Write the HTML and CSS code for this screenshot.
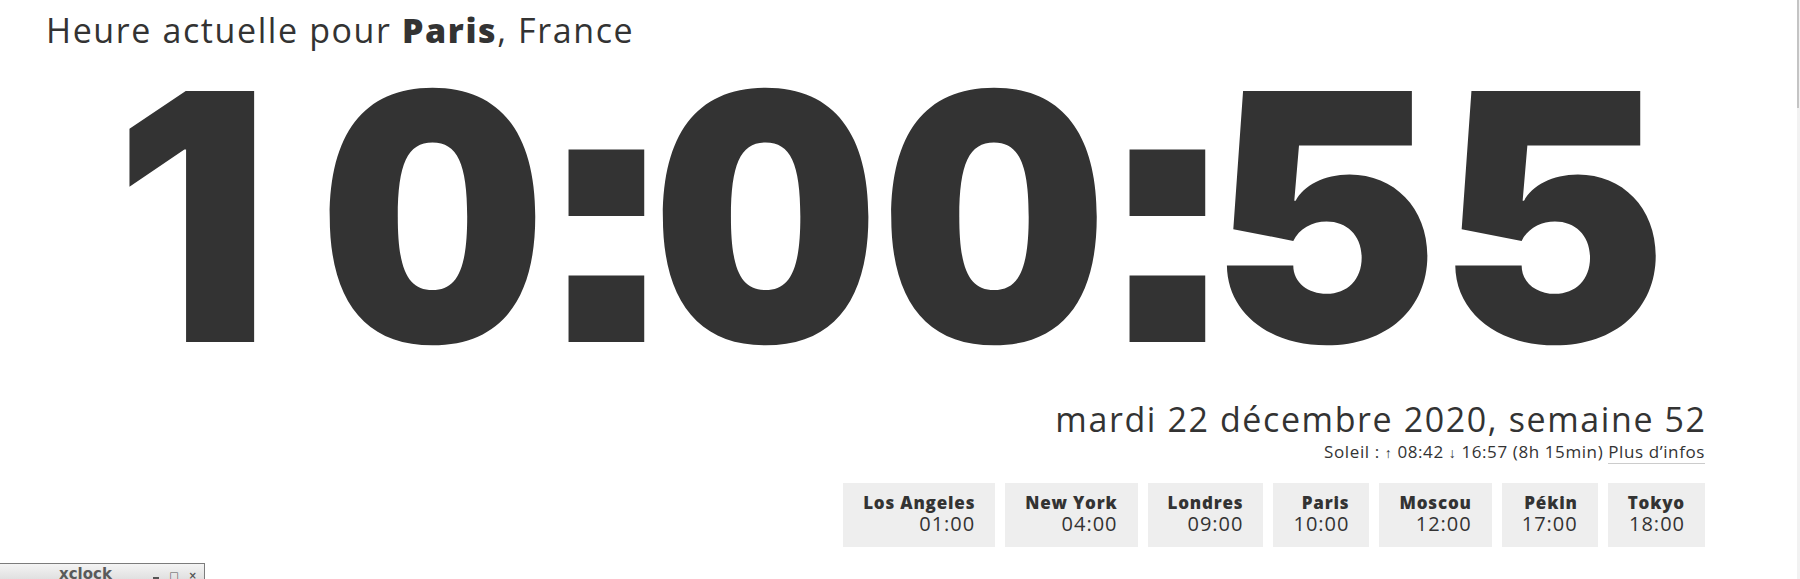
FILE: index.html
```html
<!DOCTYPE html>
<html lang="fr">
<head>
<meta charset="utf-8">
<title>Heure actuelle pour Paris, France</title>
<link rel="stylesheet" href="styles.css">
</head>
<body>
<main class="page">
  <h1 class="title">Heure actuelle pour <strong>Paris</strong>, France</h1>
  <div class="clock"><span class="one">1</span>0<span class="sep">:</span>00<span class="sep">:</span>55</div>
  <section class="info">
    <div class="date">mardi 22 décembre 2020, semaine 52</div>
    <div class="sun">Soleil : <span class="arr">↑</span> 08:42 <span class="arr">↓</span> 16:57 (8h 15min) <a class="more" href="#">Plus d’infos</a></div>
    <ul class="cities">
      <li class="city"><span class="name">Los Angeles</span><span class="time">01:00</span></li>
      <li class="city"><span class="name">New York</span><span class="time">04:00</span></li>
      <li class="city"><span class="name">Londres</span><span class="time">09:00</span></li>
      <li class="city"><span class="name">Paris</span><span class="time">10:00</span></li>
      <li class="city"><span class="name">Moscou</span><span class="time">12:00</span></li>
      <li class="city"><span class="name">Pékin</span><span class="time">17:00</span></li>
      <li class="city"><span class="name">Tokyo</span><span class="time">18:00</span></li>
    </ul>
  </section>
</main>
<div class="scrollbar"><div class="thumb"></div></div>
<div class="xclock">
  <span class="xtitle">xclock</span>
  <span class="xbtns"><span class="xb xmin"></span><span class="xb">□</span><span class="xb">×</span></span>
</div>
</body>
</html>
```

FILE: styles.css
```css
html, body {
  margin: 0;
  padding: 0;
  background: #fff;
  overflow: hidden;
}
body {
  font-family: "Open Sans", "Liberation Sans", sans-serif;
  color: #333;
  width: 1800px;
  height: 579px;
  position: relative;
}
.page {
  padding: 10px 95px 0 46px;
}
.title {
  margin: 0;
  font-size: 34px;
  line-height: 40.8px;
  font-weight: 400;
  letter-spacing: 1.6px;
}
.title strong {
  font-weight: 800;
}
.clock {
  margin-top: 16px;
  padding-left: 36px;
  font-family: "Inter", "DejaVu Sans", sans-serif;
  font-weight: 900;
  font-size: 345px;
  line-height: 300px;
  letter-spacing: 6px;
  font-variant-numeric: tabular-nums;
  text-align: center;
  color: #333;
  white-space: nowrap;
}
.one {
  font-variant-numeric: proportional-nums;
  margin-right: 45px;
}
.sep {
  display: inline-block;
  font-family: "DejaVu Sans", sans-serif;
  font-weight: 700;
  font-size: 352px;
  line-height: 0;
  letter-spacing: 0;
  margin: 0 -22px 0 -14px;
  transform: scaleX(1.22);
}
.info {
  display: flex;
  flex-direction: column;
  align-items: flex-end;
}
.date {
  margin-top: 32px;
  font-size: 34px;
  line-height: 40.8px;
  letter-spacing: 1.6px;
  margin-right: -1.6px;
}
.sun {
  margin-top: 1px;
  font-size: 17px;
  line-height: 22px;
  letter-spacing: 0.6px;
}
.arr {
  font-size: 14px;
}
.more {
  color: #333;
  text-decoration: none;
  border-bottom: 1px solid #ccc;
}
.cities {
  list-style: none;
  margin: 19px 0 0;
  padding: 0;
  display: flex;
  gap: 10px;
}
.city {
  background: #eee;
  padding: 10px 20px 12px;
  display: flex;
  flex-direction: column;
  align-items: flex-end;
}
.name {
  font-weight: 800;
  font-size: 17px;
  line-height: 20px;
  letter-spacing: 0.8px;
}
.time {
  font-size: 20px;
  line-height: 22px;
  letter-spacing: 1px;
}
.scrollbar {
  position: absolute;
  top: 0;
  right: 0;
  width: 3px;
  height: 100%;
  background: #f2f2f2;
}
.thumb {
  width: 2px;
  height: 108px;
  background: #c4c4c4;
}
.xclock {
  position: absolute;
  left: 0;
  bottom: 0;
  width: 204px;
  height: 15px;
  border-top: 1px solid #7c7c7c;
  border-right: 1px solid #7c7c7c;
  background: linear-gradient(#f4f4f4, #e0e0e0);
  font-family: "DejaVu Sans", sans-serif;
  overflow: hidden;
}
.xtitle {
  position: absolute;
  left: 59px;
  top: 1px;
  font-size: 15px;
  font-weight: 700;
  color: #5a5a5a;
  line-height: 18px;
}
.xbtns {
  position: absolute;
  right: 7px;
  top: 7px;
  display: flex;
  align-items: flex-start;
  gap: 10px;
  font-size: 10px;
  line-height: 10px;
  color: #555;
  font-weight: 700;
}
.xmin {
  width: 6px;
  height: 2px;
  margin-top: 6px;
  background: #555;
}
```
